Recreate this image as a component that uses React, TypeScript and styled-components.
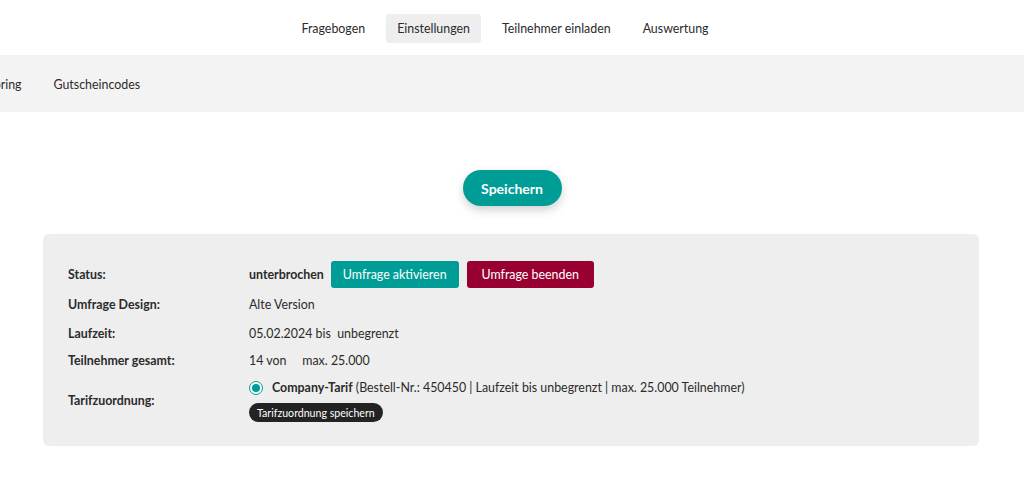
import * as React from 'react';
import styled, { createGlobalStyle } from 'styled-components';

const GlobalStyle = createGlobalStyle`
  html, body {
    margin: 0;
    padding: 0;
    background: #ffffff;
    font-family: Lato, "Open Sans", sans-serif;
    color: #2b2b2b;
    overflow: hidden;
  }
`;

const Page = styled.div`
  width: 1024px;
  height: 483px;
  display: flex;
  flex-direction: column;
`;

const TopNav = styled.nav`
  display: flex;
  justify-content: center;
  align-items: center;
  gap: 10px;
  height: 55px;
  padding-right: 14px;
`;

const TopItem = styled.div<{ $active?: boolean }>`
  font-size: 12.4px;
  padding: 0 11px;
  height: 29px;
  display: flex;
  align-items: center;
  border-radius: 3px;
  margin-top: 1px;
  background: ${p => (p.$active ? '#eeeeee' : 'transparent')};
  color: #2b2b2b;
`;

const SubNav = styled.nav`
  height: 57px;
  background: #f4f3f3;
  display: flex;
  align-items: center;
  overflow: hidden;
`;

const SubList = styled.div`
  display: flex;
  gap: 32px;
  margin-left: -39px;
  margin-top: 2px;
`;

const SubItem = styled.div`
  font-size: 12.4px;
  white-space: nowrap;
`;

const SaveRow = styled.div`
  display: flex;
  justify-content: center;
  padding-top: 58px;
`;

const SaveButton = styled.button`
  font-family: Lato, sans-serif;
  font-weight: 700;
  font-size: 14px;
  color: #ffffff;
  background: #009d97;
  border: none;
  border-radius: 18px;
  width: 99px;
  height: 36px;
  box-shadow: 0 4px 10px rgba(0, 0, 0, 0.18);
`;

const Panel = styled.section`
  margin: 28px 45px 0 43px;
  background: #eeeeee;
  border-radius: 6px;
  padding: 25px 25px 20px;
  display: grid;
  grid-template-columns: 181px 1fr;
  align-items: center;
`;

const Label = styled.div<{ $h: number }>`
  font-size: 12.4px;
  font-weight: 700;
  height: ${p => p.$h}px;
  display: flex;
  align-items: center;
  color: #2b2b2b;
`;

const Value = styled.div<{ $h: number }>`
  font-size: 12.4px;
  height: ${p => p.$h}px;
  display: flex;
  align-items: center;
  gap: 7px;
  color: #2b2b2b;
`;

const Strong = styled.span`
  font-weight: 700;
`;

const ActionButton = styled.button<{ $tone: 'teal' | 'red' }>`
  font-family: Lato, sans-serif;
  font-size: 12.4px;
  color: #ffffff;
  background: ${p => (p.$tone === 'teal' ? '#009d97' : '#990032')};
  border: none;
  border-radius: 3px;
  height: 27px;
  padding: 0 ${p => (p.$tone === 'teal' ? 12 : 15)}px;
  margin-left: ${p => (p.$tone === 'teal' ? 0 : 1)}px;
`;

const TarifCol = styled.div`
  align-self: start;
  display: flex;
  flex-direction: column;
  gap: 8px;
  padding-top: 6px;
`;

const RadioLine = styled.div`
  display: flex;
  align-items: center;
  gap: 9px;
  font-size: 12.4px;
  line-height: 15px;
`;

const Radio = styled.span`
  width: 14px;
  height: 14px;
  border-radius: 50%;
  border: 1.5px solid #009d97;
  box-sizing: border-box;
  background: #ffffff;
  display: flex;
  align-items: center;
  justify-content: center;
  &::after {
    content: '';
    width: 8px;
    height: 8px;
    border-radius: 50%;
    background: #009d97;
  }
`;

const PillButton = styled.button`
  align-self: flex-start;
  font-family: Lato, sans-serif;
  font-size: 10.6px;
  color: #ffffff;
  background: #232323;
  border: none;
  border-radius: 10px;
  height: 19px;
  padding: 0 8px;
`;

export default function App() {
  return (
    <Page>
      <GlobalStyle />
      <TopNav>
        <TopItem>Fragebogen</TopItem>
        <TopItem $active>Einstellungen</TopItem>
        <TopItem>Teilnehmer einladen</TopItem>
        <TopItem>Auswertung</TopItem>
      </TopNav>
      <SubNav>
        <SubList>
          <SubItem>Monitoring</SubItem>
          <SubItem>Gutscheincodes</SubItem>
        </SubList>
      </SubNav>
      <SaveRow>
        <SaveButton>Speichern</SaveButton>
      </SaveRow>
      <Panel>
        <Label $h={30}>Status:</Label>
        <Value $h={30}>
          <Strong>unterbrochen</Strong>
          <ActionButton $tone="teal">Umfrage aktivieren</ActionButton>
          <ActionButton $tone="red">Umfrage beenden</ActionButton>
        </Value>
        <Label $h={31}>Umfrage Design:</Label>
        <Value $h={31}>Alte Version</Value>
        <Label $h={26}>Laufzeit:</Label>
        <Value $h={26}>05.02.2024 bis&nbsp; unbegrenzt</Value>
        <Label $h={28}>Teilnehmer gesamt:</Label>
        <Value $h={28}>14 von&nbsp;&nbsp;&nbsp;&nbsp; max. 25.000</Value>
        <Label $h={52}>Tarifzuordnung:</Label>
        <TarifCol>
          <RadioLine>
            <Radio />
            <span>
              <Strong>Company-Tarif</Strong> (Bestell-Nr.: 450450 | Laufzeit bis unbegrenzt | max. 25.000 Teilnehmer)
            </span>
          </RadioLine>
          <PillButton>Tarifzuordnung speichern</PillButton>
        </TarifCol>
      </Panel>
    </Page>
  );
}
